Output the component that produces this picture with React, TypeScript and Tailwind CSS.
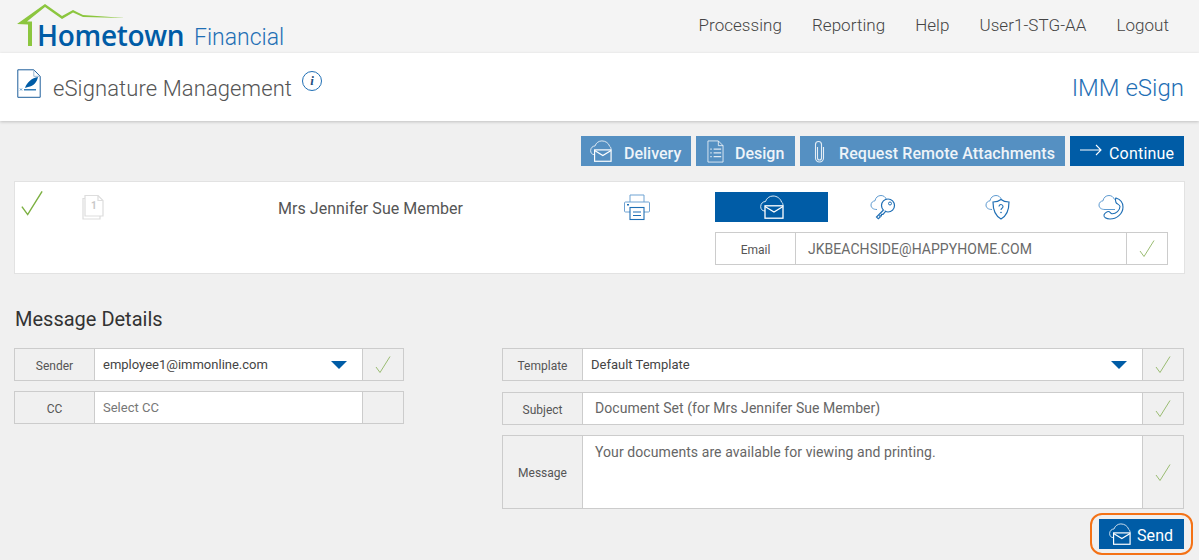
const font = { fontFamily: 'Roboto, sans-serif' };

const CloudMail = ({ className = 'w-[22px] h-[22px]' }: { className?: string }) => (
  <svg viewBox="0 0 24 24" fill="none" stroke="currentColor" className={className}>
    <path d="M5 16C2 16 .7 14 .7 11.500.7 8.500 3 6.500 5.500 6.500 6.500 3.200 9.500 1 13 1 17 1 20.500 3.500 21.500 7c1 .5 1.500 2 1.500 3.500" strokeWidth="1" strokeOpacity="0.85" />
    <rect x="5" y="10.800" width="18" height="12.400" strokeWidth="1.300" />
    <path d="M5 11.500l9 5.500 9-5.500" strokeWidth="1.300" />
  </svg>
);

const SMALL_CLOUD = 'M7 15.500C3.500 15.500 1 14 1 11 1 8.500 3 7 5 6.800 5.500 3.500 8 1.500 11 1.500 13.500 1.500 15.500 3 16.500 5.500';

const CloudKey = () => (
  <svg viewBox="0 0 26 26" fill="none" className="w-[26px] h-[26px]">
    <path d={SMALL_CLOUD} stroke="#5f9bd1" strokeWidth="1" />
    <circle cx="18" cy="11.500" r="6.500" fill="#fff" stroke="#1f6fb5" strokeWidth="1.200" />
    <circle cx="20" cy="9.500" r="1.500" stroke="#1f6fb5" strokeWidth="1" />
    <path d="M13.500 16 6.500 23l1.800 1.800 1.700-1.500-.2-1.500 1.600.1.100-1.600 1.500.1 3-3.600" fill="#fff" stroke="#1f6fb5" strokeWidth="1.200" />
  </svg>
);

const CloudShield = () => (
  <svg viewBox="0 0 26 26" fill="none" className="w-[26px] h-[26px]">
    <path d={SMALL_CLOUD} stroke="#5f9bd1" strokeWidth="1" />
    <path d="M16 5.500c2 1.700 4.500 2.500 8 2.500 0 8-1.600 13.500-8 17C9.600 21.500 8 16 8 8c3.500 0 6-.8 8-2.500Z" fill="#fff" stroke="#1f6fb5" strokeWidth="1.200" />
    <path d="M14 12.500a2 2 0 1 1 3 1.800c-.7.400-1 .8-1 1.700" stroke="#1f6fb5" strokeWidth="1.100" />
    <circle cx="16" cy="18.500" r=".8" fill="#1f6fb5" />
  </svg>
);

const CloudPhone = () => (
  <svg viewBox="0 0 26 26" fill="none" className="w-[26px] h-[26px]">
    <path d={SMALL_CLOUD} stroke="#5f9bd1" strokeWidth="1" />
    <path d="M7 15.500h10" stroke="#5f9bd1" strokeWidth="1" />
    <path d="M18 4C22.500 5.500 25 9 25 13 25 20 18.500 25 12 25 8 25 5.500 23 6 21 6.500 19.500 9 17.500 10.500 17.500 12 17.500 12.500 19.500 14 19.800 18 20 22 16 22 12.500 22 10.500 18.500 10 18 8.500 17.500 7 17 5 18 4Z" fill="#fff" stroke="#1f6fb5" strokeWidth="1.100" />
  </svg>
);

const Printer = () => (
  <svg viewBox="0 0 28 28" fill="none" className="w-[28px] h-[28px]">
    <path d="M7 9V2h14v7" stroke="#6fa3d3" strokeWidth="1" />
    <path d="M7 19H2.500a1 1 0 0 1-1-1V10a1 1 0 0 1 1-1h23a1 1 0 0 1 1 1v8a1 1 0 0 1-1 1H21" stroke="#6fa3d3" strokeWidth="1" />
    <rect x="4" y="11" width="2" height="1.500" fill="#1f6fb5" />
    <rect x="7" y="14.500" width="14" height="12" fill="#fff" stroke="#1f6fb5" strokeWidth="1.100" />
    <path d="M10 19h8M10 22.500h8" stroke="#1f6fb5" strokeWidth="1.100" />
  </svg>
);

const DocList = () => (
  <svg viewBox="0 0 18 24" fill="none" stroke="#fff" strokeOpacity="0.8" className="w-[17px] h-[23px]">
    <path d="M1 .8h11l5 5v17.400H1Z" strokeWidth="1" />
    <path d="M12 .8v5h5" strokeWidth="1" />
    <path d="M3.500 9.500h1.500M7 9.500h8M3.500 13.500h1.500M7 13.500h8M3.500 17.500h1.500M7 17.500h8" strokeWidth="1.300" />
  </svg>
);

const Clip = () => (
  <svg viewBox="0 0 11 23" fill="none" stroke="#fff" strokeOpacity="0.85" strokeWidth="1.100" className="w-[11px] h-[23px]">
    <path d="M3.500 7v11a2 2 0 0 0 4 0V4.500a3 3 0 0 0-6 0V18a4 4 0 0 0 8 0V7" />
  </svg>
);

const Arrow = () => (
  <svg viewBox="0 0 22 12" fill="none" stroke="#fff" strokeWidth="1.100" className="w-[22px] h-[12px] -mt-[3px]">
    <path d="M0 6h21M16 1l5 5-5 5" />
  </svg>
);

const Check = ({ className = 'w-[16px] h-[19px]', color = '#9abc72' }: { className?: string; color?: string }) => (
  <svg viewBox="0 0 16 18" fill="none" stroke={color} strokeWidth="1" className={className}>
    <path d="M1 11.500 5 17 15 1" />
  </svg>
);

const Caret = () => (
  <svg viewBox="0 0 16 8" className="w-[16px] h-[8px]">
    <path d="M0 0h16L8 8Z" fill="#005ca6" />
  </svg>
);

const Field = ({ label, labelBg = 'bg-[#f0f0f0]', children, check = true, h = 'h-[33px]' }: {
  label: string;
  labelBg?: string;
  children: React.ReactNode;
  check?: boolean;
  h?: string;
}) => (
  <div className={`flex border border-[#cccccc] ${h}`}>
    <div className={`w-[80px] ${labelBg} shrink-0 flex items-center justify-center pt-[2px] text-[12px] text-[#555555] border-r border-[#cccccc]`}>{label}</div>
    <div className="flex-1 min-w-0 bg-white">{children}</div>
    <div className="w-[41px] shrink-0 flex items-center justify-center border-l border-[#cccccc]">
      {check && <Check />}
    </div>
  </div>
);

export default function App() {
  return (
    <div className="w-[1199px] h-[560px] overflow-hidden bg-[#f0f0f0]" style={font}>
      {/* top nav */}
      <header className="h-[53px] bg-[#f4f4f4] flex items-center justify-between pl-[15px] pr-[30px]">
        <div className="relative w-[280px] h-[53px]">
          <svg viewBox="0 0 115 48" className="absolute left-0 top-0 w-[115px] h-[48px]">
            <path d="M2 24 30 4l17 12 11-6 10 5 42 3-42-1-10-4.500L47 19 30 7 12 21.500h5V46h-4V24.500Z" fill="#8cc63f" />
          </svg>
          <span className="absolute left-[22px] top-[18px] text-[28px] leading-[34px] text-[#005ca6] tracking-[-0.3px]" style={{ fontFamily: '"Open Sans", sans-serif', fontWeight: 600 }}>Hometown</span>
          <span className="absolute left-[179px] top-[24px] text-[23px] leading-[28px] font-light text-[#1f6fb5]">Financial</span>
        </div>
        <nav className="flex gap-[30px] text-[17px] tracking-[0.05px] text-[#444444] font-light -mt-[1px]">
          <span>Processing</span>
          <span>Reporting</span>
          <span>Help</span>
          <span>User1-STG-AA</span>
          <span>Logout</span>
        </nav>
      </header>

      {/* title bar */}
      <div className="h-[68px] bg-white shadow-[0_1px_3px_rgba(0,0,0,0.2)] flex justify-between pl-[17px] pr-[15px]">
        <div className="flex items-start pt-[16px]">
          <svg viewBox="0 0 24 29" fill="none" className="w-[24px] h-[29px]">
            <path d="M.8.800h16l6.400 6.500v21H.8Z" stroke="#1f5f9c" strokeWidth="1" />
            <path d="M16.800.800v6.500h6.400" stroke="#9bb7d1" strokeWidth="1" />
            <path d="M8 19C10 13 15 9 21 8 20 13 17 17 11 18Z" fill="#005ca6" />
            <path d="M7 20.800h12" stroke="#005ca6" strokeWidth="1.200" />
            <path d="M3 19.500l2 2M5 19.500l-2 2" stroke="#005ca6" strokeWidth=".6" />
          </svg>
          <span className="ml-[12px] mt-[5px] text-[22px] tracking-[0.1px] leading-[30px] font-light text-[#555555]">eSignature Management</span>
          <span className="ml-[10px] mt-[2px] w-[20px] h-[20px] rounded-full border border-[#1f6fb5] flex items-center justify-center text-[13px] italic font-bold text-[#1f4f7f]" style={{ fontFamily: '"Liberation Serif", serif' }}>i</span>
        </div>
        <span className="mt-[19px] text-[24px] leading-[32px] font-light text-[#1f6fb5]">IMM eSign</span>
      </div>

      <main className="px-[15px]">
        {/* actions */}
        <div className="flex justify-end gap-[5px] mt-[15px] text-[16px] text-white">
          <div className="h-[30px] w-[110px] bg-[#5590c2] flex items-center pl-[9px] gap-[12px]">
            <CloudMail />
            <span className="font-medium opacity-90 pt-[6px]">Delivery</span>
          </div>
          <div className="h-[30px] w-[99px] bg-[#5590c2] flex items-center pl-[11px] gap-[11px]">
            <DocList />
            <span className="font-medium opacity-90 pt-[6px]">Design</span>
          </div>
          <div className="h-[30px] w-[265px] bg-[#5590c2] flex items-center pl-[14px] gap-[14px]">
            <Clip />
            <span className="font-medium tracking-[0.07px] opacity-90 whitespace-nowrap pt-[6px]">Request Remote Attachments</span>
          </div>
          <div className="h-[30px] w-[114px] bg-[#005ca6] flex items-center pl-[10px] gap-[7px]">
            <Arrow />
            <span className="pt-[6px] tracking-[0.2px]">Continue</span>
          </div>
        </div>

        {/* recipient card */}
        <section className="mt-[15px] -ml-[1px] w-[1171px] h-[93px] bg-white border border-[#e2e2e2] flex">
          <div className="w-[67px] shrink-0 pl-[5px] pt-[8px]">
            <Check className="w-[24px] h-[26px]" color="#7cb041" />
          </div>
          <div className="w-[36px] shrink-0 pt-[12px]">
            <div className="relative w-[22px] h-[26px]">
              <svg viewBox="0 0 22 26" fill="none" stroke="#dddddd" strokeWidth="1.200" className="w-[22px] h-[26px]">
                <path d="M3 1.500h13l5 5V22H3Z" />
                <path d="M16 1.500v5h5M3 4.500H1V25h17v-3" />
              </svg>
              <span className="absolute left-[9px] top-[5px] text-[10px] leading-[14px] font-bold text-[#c8c8c8]">1</span>
            </div>
          </div>
          <div className="w-[505px] shrink-0 pt-[17px] text-center text-[16px] tracking-[0.05px] leading-[20px] text-[#555555]">Mrs Jennifer Sue Member</div>
          <div className="w-[92px] shrink-0 pt-[11px]">
            <Printer />
          </div>
          <div className="w-[453px] shrink-0 pt-[10px]">
            <div className="grid grid-cols-4 h-[30px]">
              <div className="bg-[#005ca6] flex items-center justify-center text-white">
                <CloudMail className="w-[24px] h-[24px]" />
              </div>
              <div className="flex items-center justify-center pr-[3px]"><CloudKey /></div>
              <div className="flex items-center justify-center"><CloudShield /></div>
              <div className="flex items-center justify-center"><CloudPhone /></div>
            </div>
            <div className="mt-[10px]">
              <Field label="Email" labelBg="bg-white">
                <div className="h-full flex items-center pl-[12px] pt-[1px] text-[14px] tracking-[0.04px] text-[#6a6a6a]">JKBEACHSIDE@HAPPYHOME.COM</div>
              </Field>
            </div>
          </div>
        </section>

        <h2 className="mt-[33px] text-[20px] leading-[24px] text-[#333333]">Message Details</h2>

        {/* message form */}
        <div className="mt-[17px] -ml-[1px] flex items-start w-[1170px]">
          <div className="w-[390px] shrink-0 flex flex-col gap-[10px]">
            <Field label="Sender">
              <div className="h-full flex items-center justify-between pl-[8px] pr-[15px] text-[13px] text-[#444444]">
                <span>employee1@immonline.com</span>
                <Caret />
              </div>
            </Field>
            <Field label="CC" check={false}>
              <div className="h-full flex items-center pl-[8px] text-[13px] text-[#777777]">Select CC</div>
            </Field>
          </div>
          <div className="ml-[98px] flex-1 flex flex-col gap-[10px]">
            <div className="mb-[1px]">
              <Field label="Template">
                <div className="h-full flex items-center justify-between pl-[8px] pr-[15px] text-[13px] text-[#444444]">
                  <span>Default Template</span>
                  <Caret />
                </div>
              </Field>
            </div>
            <Field label="Subject">
              <div className="h-full flex items-center pl-[12px] text-[14px] tracking-[0.05px] text-[#666666]">Document Set (for Mrs Jennifer Sue Member)</div>
            </Field>
            <Field label="Message" h="h-[74px]">
              <div className="pl-[12px] pt-[7px] text-[14px] tracking-[0.08px] leading-[18px] text-[#666666]">Your documents are available for viewing and printing.</div>
            </Field>
            <div className="flex justify-end -mt-[6px]">
              <div className="-mr-[9px] border-2 border-[#f47216] rounded-[12px] pl-[7px] pr-[7px] py-[4px]">
                <div className="w-[85px] h-[30px] bg-[#005ca6] flex items-center pl-[10px] gap-[6px] text-white text-[16px]">
                  <CloudMail />
                  <span className="pt-[3px] tracking-[0.1px]">Send</span>
                </div>
              </div>
            </div>
          </div>
        </div>
      </main>
    </div>
  );
}
